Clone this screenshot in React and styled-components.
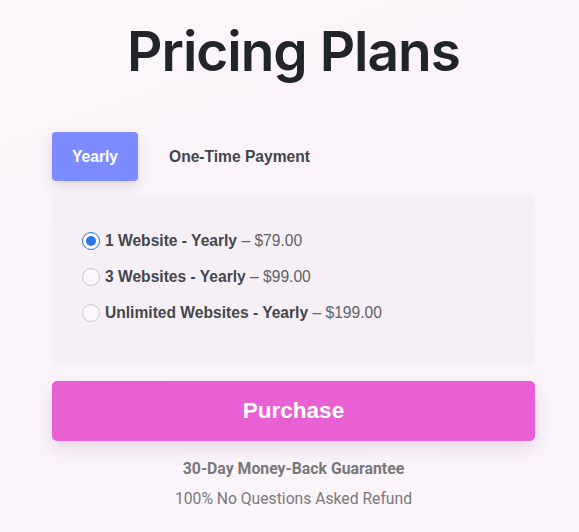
import React, { useState } from "react";
import styled, { createGlobalStyle } from "styled-components";

const Global = createGlobalStyle`
  html, body { margin: 0; padding: 0; }
  body {
    min-height: 532px;
    background: linear-gradient(160deg, #fbf8fb 0%, #fbf3fa 40%, #fcf4fb 100%);
    font-family: "Liberation Sans", Arial, sans-serif;
  }
`;

const Page = styled.div`
  width: 579px;
  height: 532px;
  box-sizing: border-box;
  padding: 0 44px 0 52px;
  display: flex;
  flex-direction: column;
  align-items: stretch;
`;

const Title = styled.h1`
  margin: 16px 0 0;
  font-family: Inter, "Noto Sans", sans-serif;
  font-weight: 600;
  font-size: 55px;
  line-height: 70px;
  letter-spacing: -1px;
  color: #212428;
  text-align: center;
`;

const Tabs = styled.div`
  display: flex;
  align-items: center;
  margin-top: 46px;
`;

const Tab = styled.button`
  border: none;
  font-family: "Liberation Sans", Arial, sans-serif;
  font-weight: 700;
  font-size: 15.6px;
  height: 49px;
  width: ${(p) => (p.$active ? "86px" : "auto")};
  padding: 0 ${(p) => (p.$active ? "0" : "31px")};
  border-radius: 4px;
  cursor: pointer;
  background: ${(p) => (p.$active ? "#7c8bff" : "transparent")};
  color: ${(p) => (p.$active ? "#ffffff" : "#41454c")};
  box-shadow: ${(p) => (p.$active ? "0 6px 14px rgba(60, 40, 80, 0.14)" : "none")};
`;

const Panel = styled.div`
  margin-top: 15px;
  height: 169px;
  box-sizing: border-box;
  background: #f6f0f6;
  border-radius: 6px;
  padding: 35px 30px 33px;
  display: flex;
  flex-direction: column;
  gap: 16px;
`;

const Option = styled.label`
  display: flex;
  align-items: center;
  gap: 5px;
  height: 20px;
  font-size: 15.6px;
  color: #43474e;
  cursor: pointer;
`;

const Radio = styled.span`
  width: 18px;
  height: 18px;
  flex: none;
  box-sizing: border-box;
  border-radius: 50%;
  border: 1px solid ${(p) => (p.$checked ? "#2a73e8" : "#c8c6c8")};
  background: ${(p) => (p.$checked ? "#ffffff" : "#f9f7f9")};
  display: flex;
  align-items: center;
  justify-content: center;
  &::after {
    content: "";
    width: 10px;
    height: 10px;
    border-radius: 50%;
    background: ${(p) => (p.$checked ? "#2a73e8" : "transparent")};
  }
`;

const Name = styled.b`
  font-weight: 700;
`;

const Price = styled.span`
  color: #5f6268;
`;

const Purchase = styled.button`
  margin-top: 16px;
  height: 60px;
  border: none;
  border-radius: 5px;
  background: #e95fd4;
  color: #ffffff;
  font-family: "Liberation Sans", Arial, sans-serif;
  font-weight: 700;
  font-size: 22.5px;
  box-shadow: 0 8px 18px rgba(80, 40, 80, 0.12);
  cursor: pointer;
`;

const Guarantee = styled.p`
  margin: 18px 0 0;
  line-height: 20px;
  text-align: center;
  font-family: Roboto, sans-serif;
  font-weight: 700;
  font-size: 15.8px;
  color: #787878;
`;

const Refund = styled.p`
  margin: 10px 0 0;
  line-height: 20px;
  text-align: center;
  font-family: Roboto, sans-serif;
  font-size: 15.7px;
  color: #7a7a7a;
`;

const plans = [
  { name: "1 Website - Yearly", price: "$79.00" },
  { name: "3 Websites - Yearly", price: "$99.00" },
  { name: "Unlimited Websites - Yearly", price: "$199.00" },
];

export default function App() {
  const [tab, setTab] = useState(0);
  const [sel, setSel] = useState(0);
  return (
    <>
      <Global />
      <Page>
        <Title>Pricing Plans</Title>
        <Tabs>
          <Tab $active={tab === 0} onClick={() => setTab(0)}>Yearly</Tab>
          <Tab $active={tab === 1} onClick={() => setTab(1)}>One-Time Payment</Tab>
        </Tabs>
        <Panel>
          {plans.map((p, i) => (
            <Option key={p.name} onClick={() => setSel(i)}>
              <Radio $checked={sel === i} />
              <span>
                <Name>{p.name}</Name> <Price>– {p.price}</Price>
              </span>
            </Option>
          ))}
        </Panel>
        <Purchase>Purchase</Purchase>
        <Guarantee>30-Day Money-Back Guarantee</Guarantee>
        <Refund>100% No Questions Asked Refund</Refund>
      </Page>
    </>
  );
}
